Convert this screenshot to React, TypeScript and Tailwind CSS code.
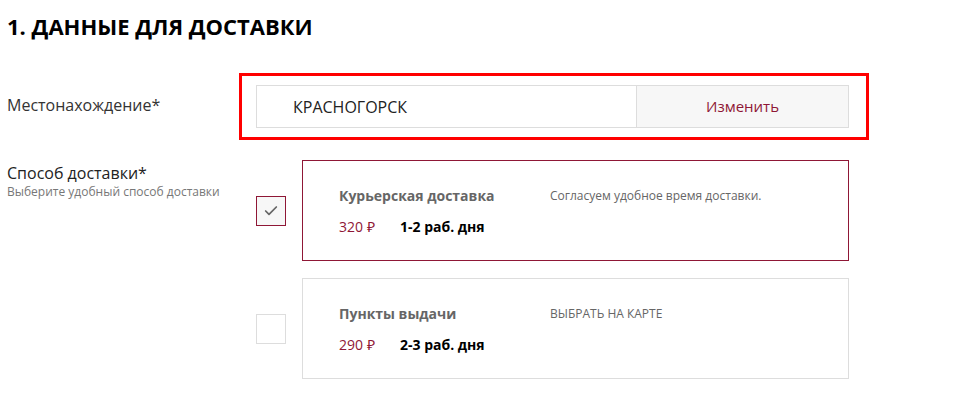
import { Check } from "lucide-react";

const maroon = "text-[#8f1736]";

type Option = {
  title: string;
  note: string;
  price: string;
  days: string;
  selected: boolean;
};

const options: Option[] = [
  { title: "Курьерская доставка", note: "Согласуем удобное время доставки.", price: "320 ₽", days: "1-2 раб. дня", selected: true },
  { title: "Пункты выдачи", note: "ВЫБРАТЬ НА КАРТЕ", price: "290 ₽", days: "2-3 раб. дня", selected: false },
];

function DeliveryOption({ option }: { option: Option }) {
  return (
    <div className="flex items-center">
      <div
        className={
          option.selected
            ? "flex h-[30px] w-[30px] items-center justify-center border border-[#8f1736] bg-[#f7f7f7]"
            : "h-[30px] w-[30px] border border-[#dddddd] bg-white"
        }
      >
        {option.selected && <Check className="h-[16px] w-[16px] text-[#666666]" strokeWidth={2.6} />}
      </div>
      <div
        className={
          option.selected
            ? "ml-[16px] h-[101px] w-[547px] border border-[#8f1736] pl-[36px] pt-[25px]"
            : "ml-[16px] h-[101px] w-[547px] border border-[#dddddd] pl-[36px] pt-[25px]"
        }
      >
        <div className="flex items-center leading-[20px]">
          <div className="w-[211px] text-[14px] font-bold text-[#666666]">{option.title}</div>
          <div className="text-[12px] text-[#666666]">{option.note}</div>
        </div>
        <div className="mt-[11px] flex items-center text-[14px] leading-[20px]">
          <div className={`w-[61px] ${maroon}`}>{option.price}</div>
          <div className="font-bold text-black">{option.days}</div>
        </div>
      </div>
    </div>
  );
}

export default function App() {
  return (
    <div className="h-[406px] w-[957px] bg-white pl-[7px] pt-[11px] font-['Open_Sans',sans-serif] text-[#333333]">
      <h1 className="text-[22px] font-bold leading-[30px] text-black">1. ДАННЫЕ ДЛЯ ДОСТАВКИ</h1>

      <div className="mt-[32px] flex items-center">
        <div className="w-[232px] pb-[4px] text-[16px] text-[#333333]">Местонахождение*</div>
        <div className="flex h-[67px] w-[630px] items-center border-[3px] border-[#ff0000] pl-[14px]">
          <div className="flex h-[43px] w-[380px] items-center border border-[#dddddd] border-r-0 pl-[36px] text-[16px] text-[#222222]">
            КРАСНОГОРСК
          </div>
          <div className={`flex h-[43px] w-[213px] items-center justify-center border border-[#dddddd] bg-[#f7f7f7] text-[15px] ${maroon}`}>
            Изменить
          </div>
        </div>
      </div>

      <div className="mt-[20px] flex">
        <div className="w-[249px] pt-[2px]">
          <div className="text-[16px] leading-[22px] text-[#222222]">Способ доставки*</div>
          <div className="mt-[1px] text-[12px] leading-[14px] text-[#777777]">Выберите удобный способ доставки</div>
        </div>
        <div className="flex flex-col gap-[17px]">
          {options.map((o) => (
            <DeliveryOption key={o.title} option={o} />
          ))}
        </div>
      </div>
    </div>
  );
}
